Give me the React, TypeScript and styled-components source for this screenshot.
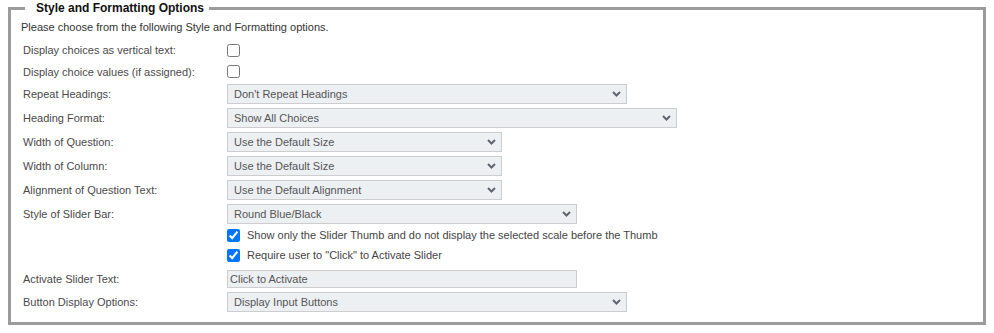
import React from "react";
import styled, { createGlobalStyle } from "styled-components";

const GlobalStyle = createGlobalStyle`
  body {
    margin: 0;
    background: #fff;
    font-family: "Liberation Sans", Arial, sans-serif;
  }
`;

const Page = styled.div`
  padding: 0 8px;
`;

const Fieldset = styled.fieldset`
  margin: 0;
  border: 3px solid #9b9b9b;
  padding: 2px 10px 10px 10px;
  min-width: 0;
`;

const Legend = styled.legend`
  margin-left: 4px;
  padding: 0 5px 0 11px;
  font-size: 12px;
  line-height: 17px;
  font-weight: bold;
  color: #111;
`;

const Intro = styled.div`
  font-size: 11px;
  line-height: 16px;
  color: #333;
  margin-bottom: 4px;
`;

const Row = styled.div<{ $h: number }>`
  display: grid;
  grid-template-columns: 206px 1fr;
  align-items: center;
  height: ${(p) => p.$h}px;
`;

const Label = styled.div`
  padding-left: 2px;
  font-size: 11px;
  color: #4a4a4a;
`;

const Control = styled.div`
  display: flex;
  align-items: center;
  gap: 7px;
  font-size: 11px;
  color: #444;
`;

const Check = styled.input.attrs({ type: "checkbox" })`
  margin: 0;
  width: 13px;
  height: 13px;
`;

const SelectBox = styled.div<{ $w: number }>`
  box-sizing: border-box;
  width: ${(p) => p.$w}px;
  height: 20px;
  display: flex;
  align-items: center;
  justify-content: space-between;
  padding: 0 5px 0 6px;
  background: #edf0f3;
  border: 1px solid #cdcdcd;
  font-size: 11px;
  color: #555;
`;

const TextBox = styled.input`
  box-sizing: border-box;
  width: 350px;
  height: 18px;
  margin: 0;
  padding: 0 2px;
  background: #edf0f3;
  border: 1px solid #cdcdcd;
  font-family: "Liberation Sans", Arial, sans-serif;
  font-size: 11px;
  color: #555;
  outline: none;
`;

const Chevron = () => (
  <svg width="9" height="6" viewBox="0 0 9 6">
    <path d="M1 1 L4.5 4.5 L8 1" fill="none" stroke="#60666e" strokeWidth="2" />
  </svg>
);

const Select = ({ w, value }: { w: number; value: string }) => (
  <SelectBox $w={w}>
    <span>{value}</span>
    <Chevron />
  </SelectBox>
);

const selects = [
  { label: "Repeat Headings:", w: 400, value: "Don't Repeat Headings" },
  { label: "Heading Format:", w: 450, value: "Show All Choices" },
  { label: "Width of Question:", w: 275, value: "Use the Default Size" },
  { label: "Width of Column:", w: 275, value: "Use the Default Size" },
  { label: "Alignment of Question Text:", w: 275, value: "Use the Default Alignment" },
  { label: "Style of Slider Bar:", w: 350, value: "Round Blue/Black" },
];

export default function App() {
  return (
    <Page>
      <GlobalStyle />
      <Fieldset>
        <Legend>Style and Formatting Options</Legend>
        <Intro>Please choose from the following Style and Formatting options.</Intro>

        <Row $h={22}>
          <Label>Display choices as vertical text:</Label>
          <Control>
            <Check />
          </Control>
        </Row>
        <Row $h={21}>
          <Label>Display choice values (if assigned):</Label>
          <Control>
            <Check />
          </Control>
        </Row>

        {selects.map((s) => (
          <Row $h={24} key={s.label}>
            <Label>{s.label}</Label>
            <Control>
              <Select w={s.w} value={s.value} />
            </Control>
          </Row>
        ))}

        <Row $h={18}>
          <span />
          <Control>
            <Check defaultChecked />
            Show only the Slider Thumb and do not display the selected scale before the Thumb
          </Control>
        </Row>
        <Row $h={22}>
          <span />
          <Control>
            <Check defaultChecked />
            Require user to "Click" to Activate Slider
          </Control>
        </Row>
        <Row $h={26}>
          <Label>Activate Slider Text:</Label>
          <Control>
            <TextBox defaultValue="Click to Activate" />
          </Control>
        </Row>
        <Row $h={20}>
          <Label>Button Display Options:</Label>
          <Control>
            <Select w={400} value="Display Input Buttons" />
          </Control>
        </Row>
      </Fieldset>
    </Page>
  );
}
